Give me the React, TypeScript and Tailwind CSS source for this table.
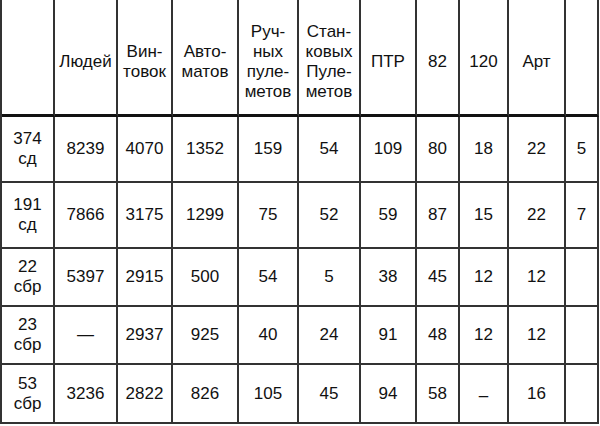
import React from "react";

const cols = "grid-cols-[53px_63px_55px_66px_60px_62px_56px_43px_49px_57px_33px]";

const headers: React.ReactNode[] = [
  "",
  "Людей",
  <>Вин-<br />товок</>,
  <>Авто-<br />матов</>,
  <>Руч-<br />ных<br />пуле-<br />метов</>,
  <>Стан-<br />ковых<br />Пуле-<br />метов</>,
  "ПТР",
  "82",
  "120",
  "Арт",
  "",
];

type Row = { h: string; cells: React.ReactNode[] };

const rows: Row[] = [
  { h: "h-[66px]", cells: [<>374<br />сд</>, "8239", "4070", "1352", "159", "54", "109", "80", "18", "22", "5"] },
  { h: "h-[66px]", cells: [<>191<br />сд</>, "7866", "3175", "1299", "75", "52", "59", "87", "15", "22", "7"] },
  { h: "h-[58px]", cells: [<>22<br />сбр</>, "5397", "2915", "500", "54", "5", "38", "45", "12", "12", ""] },
  { h: "h-[58px]", cells: [<>23<br />сбр</>, "—", "2937", "925", "40", "24", "91", "48", "12", "12", ""] },
  {
    h: "h-[59px]",
    cells: [<>53<br />сбр</>, "3236", "2822", "826", "105", "45", "94", "58", <span className="inline-block translate-y-[2px]">–</span>, "16", ""],
  },
];

export default function App() {
  return (
    <div className="w-[600px] h-[426px] bg-white text-[#111] font-['Liberation_Sans',Arial,sans-serif] text-[17px] leading-[20px]">
      <div className={`grid ${cols} w-[599px] border-l-2 border-[#333]`}>
        {headers.map((c, i) => (
          <div
            key={"h" + i}
            className="h-[117px] flex items-center justify-center text-center border-r-2 border-r-[#333] border-b-[3px] border-b-[#111] pt-[10px]"
          >
            <div>{c}</div>
          </div>
        ))}
        {rows.map((r, ri) =>
          r.cells.map((c, ci) => (
            <div
              key={ri + "-" + ci}
              className={`${r.h} flex items-center justify-center text-center border-r-2 border-b-2 border-[#333]`}
            >
              <div>{c}</div>
            </div>
          ))
        )}
      </div>
    </div>
  );
}
